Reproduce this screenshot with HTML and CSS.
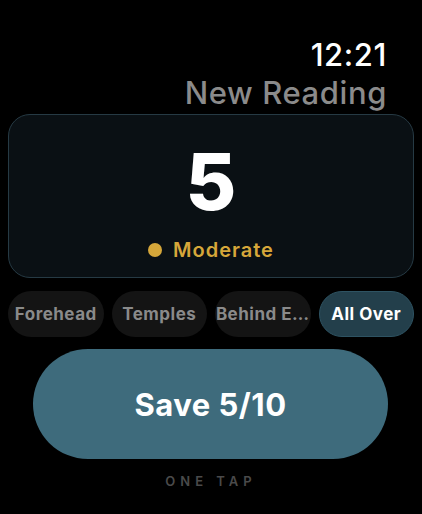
FILE: index.html
```html
<!DOCTYPE html>
<html lang="en">
<head>
    <meta charset="UTF-8">
    <meta name="viewport" content="width=device-width, initial-scale=1.0">
    <title>New Reading</title>
    <link rel="stylesheet" href="styles.css">
</head>
<body>
    <div class="screen">
        <div class="header">
            <div class="time">12:21</div>
            <div class="title">New Reading</div>
        </div>
        <div class="card">
            <div class="score">5</div>
            <div class="level"><span class="dot"></span>Moderate</div>
        </div>
        <div class="chips">
            <div class="chip">Forehead</div>
            <div class="chip">Temples</div>
            <div class="chip">Behind E…</div>
            <div class="chip active">All Over</div>
        </div>
        <button class="save">Save 5/10</button>
        <div class="hint">ONE TAP</div>
    </div>
</body>
</html>
```

FILE: styles.css
```css
body {
    margin: 0;
    background-color: #000;
    font-family: Inter, "Noto Sans", sans-serif;
    color: #fff;
}
.screen {
    width: 422px;
    height: 514px;
    padding: 0 8px;
    box-sizing: border-box;
    display: flex;
    flex-direction: column;
}
.header {
    text-align: right;
    padding: 37px 27px 0 0;
}
.time {
    font-size: 31px;
    font-weight: 500;
    letter-spacing: 0.6px;
    line-height: 35px;
}
.title {
    font-size: 31px;
    font-weight: 500;
    letter-spacing: 0.6px;
    color: #8b8b8b;
    line-height: 36px;
    margin-top: 3px;
}
.card {
    margin-top: 3px;
    height: 164px;
    box-sizing: border-box;
    background-color: #0a1014;
    border: 1.5px solid #263a44;
    border-radius: 22px;
    display: flex;
    flex-direction: column;
    align-items: center;
}
.score {
    font-size: 78px;
    font-weight: 800;
    line-height: 1;
    margin-top: 28px;
}
.level {
    display: flex;
    align-items: center;
    gap: 11px;
    color: #d6a73a;
    font-size: 20px;
    font-weight: 600;
    letter-spacing: 1px;
    margin-top: 17px;
}
.dot {
    width: 14px;
    height: 14px;
    border-radius: 50%;
    background-color: #d6a73a;
}
.chips {
    display: grid;
    grid-template-columns: repeat(4, 1fr);
    gap: 8px;
    margin-top: 13px;
}
.chip {
    height: 46px;
    box-sizing: border-box;
    border-radius: 23px;
    background-color: #141414;
    color: #8a8a8a;
    font-size: 17px;
    font-weight: 700;
    letter-spacing: 0.5px;
    display: flex;
    align-items: center;
    justify-content: center;
    white-space: nowrap;
    overflow: hidden;
}
.chip.active {
    background-color: #233f4b;
    border: 1.5px solid #2e5362;
    color: #fff;
}
.save {
    margin: 12px 26px 0 25px;
    height: 110px;
    border: none;
    border-radius: 55px;
    background-color: #3e6b7c;
    color: #fff;
    font-family: Inter, "Noto Sans", sans-serif;
    font-size: 31px;
    font-weight: 700;
    letter-spacing: 0.5px;
}
.hint {
    text-align: center;
    color: #4a4a4a;
    font-size: 13px;
    font-weight: 600;
    letter-spacing: 5px;
    margin-top: 14px;
}
```
